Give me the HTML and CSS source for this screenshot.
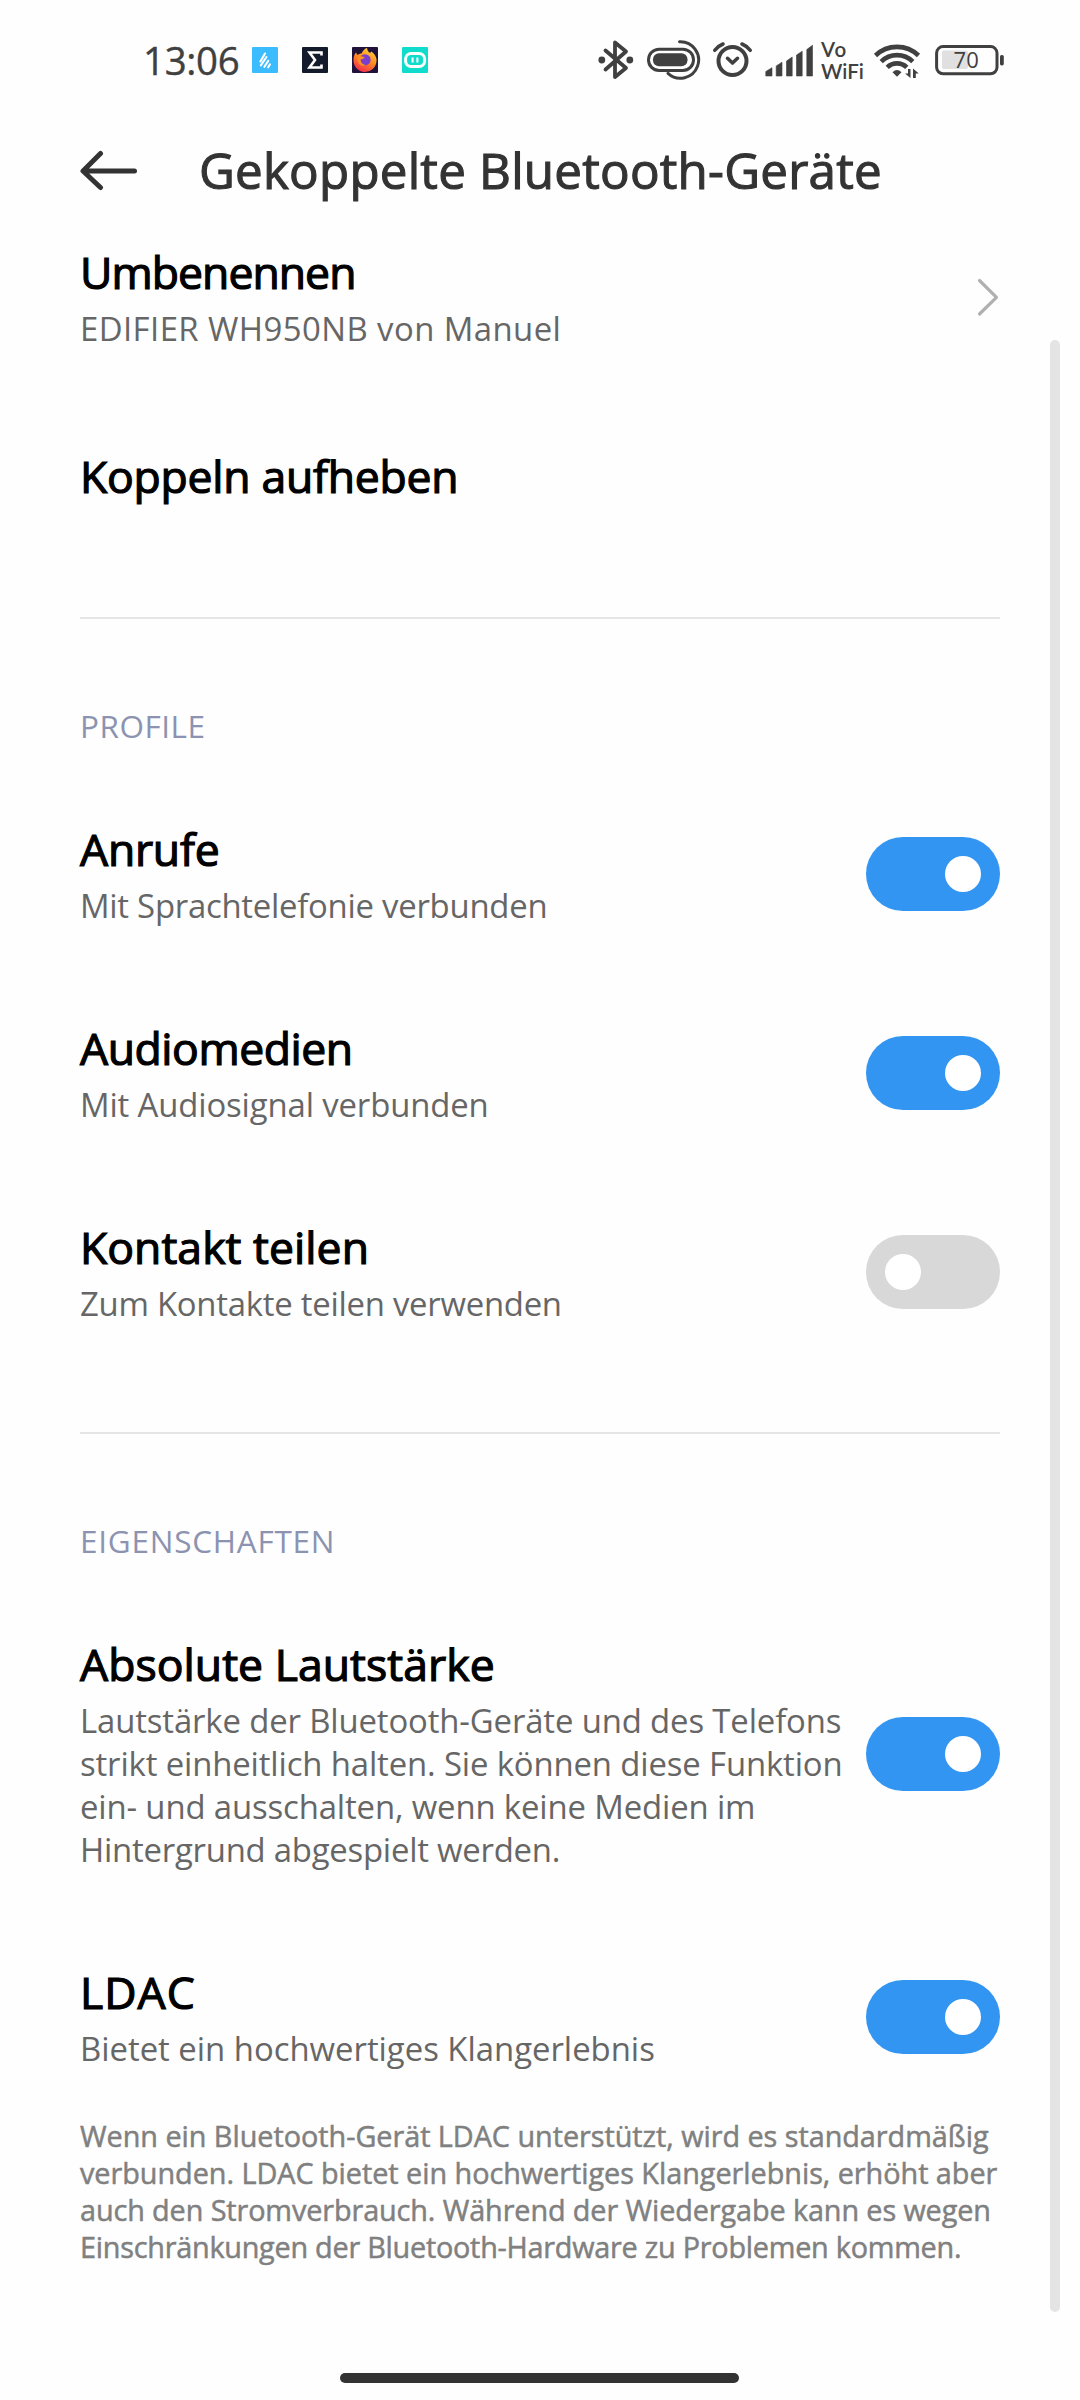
FILE: index.html
```html
<!DOCTYPE html>
<html lang="de">
<head>
    <meta charset="UTF-8">
    <meta name="viewport" content="width=device-width, initial-scale=1.0" />
    <title>Gekoppelte Bluetooth-Geräte</title>

    <link rel="stylesheet" href="styles.css">
</head>
<body>
  <div class="statusbar">
    <span class="time">13:06</span>
    <div class="apps">
      <svg width="26" height="26" viewBox="0 0 26 26">
        <rect width="26" height="26" rx="1" fill="#3bbcff"/>
        <path d="M8.4 14.5 L13 6.5 M8.8 18.3 L14.5 10 M12.4 19.8 L16.3 13.8 M16.2 20.3 L18 17.3" stroke="#fff" stroke-width="2.1" stroke-linecap="round"/>
      </svg>
      <svg width="26" height="26" viewBox="0 0 26 26">
        <rect width="26" height="26" rx="1" fill="#131a2b"/>
        <path d="M19.5 8.5 V5.5 H7.5 L13 13 L7.5 20.5 H19.5 V17.5" fill="none" stroke="#fff" stroke-width="2.6"/>
      </svg>
      <svg width="26" height="26" viewBox="0 0 26 26">
        <defs>
          <linearGradient id="fire" x1="0.8" y1="0" x2="0.3" y2="1">
            <stop offset="0" stop-color="#ffd83a"/>
            <stop offset="0.5" stop-color="#ff8a1f"/>
            <stop offset="1" stop-color="#f5294f"/>
          </linearGradient>
        </defs>
        <rect width="26" height="26" rx="1" fill="#20123a"/>
        <path d="M1.5 13 Q1.5 8 4 5.5 L5.5 8 Q8 6 9.5 6.5 Q12 1.5 15 1 Q15 4 18 6 L19.5 4.5 Q25 9 24.5 14 A11.5 11.5 0 0 1 1.5 13z" fill="url(#fire)"/>
        <circle cx="13" cy="12.8" r="5.6" fill="#7a3fd0"/>
        <path d="M4.5 9.5 Q9 8 13 10.5 Q10.5 12.5 8.5 12.5 Q9 17 13.5 18 Q10 20 7 17z" fill="#ff8f24"/>
      </svg>
      <svg width="26" height="26" viewBox="0 0 26 26">
        <rect width="26" height="26" rx="1" fill="#0fdccb"/>
        <rect x="3.6" y="6.4" width="19" height="13.2" rx="5.6" fill="none" stroke="#fff" stroke-width="3"/>
        <path d="M10.6 10.5v5M15.4 10.5v5" stroke="#fff" stroke-width="2"/>
      </svg>
    </div>

    <div class="system">
      <!-- bluetooth -->
      <svg class="bt" width="36" height="50" viewBox="0 0 36 50">
        <path class="line" d="M7.5 15.5 L28 33 L17 42 V7.5 L28 16.5 L7.5 34.5" stroke-width="3.8"/>
        <circle cx="3.8" cy="25" r="3.4"/><circle cx="31.8" cy="25" r="3.4"/>
      </svg>
      <!-- dynamic pill -->
      <svg class="pill" width="55" height="50" viewBox="0 0 55 50">
        <rect class="line" x="2.5" y="14.2" width="45" height="21.3" rx="10.6" stroke-width="3"/>
        <rect x="7" y="18.3" width="34.5" height="13" rx="6"/>
        <path class="line" d="M33.5 6.8 A18.2 18.2 0 1 1 22 38.3" stroke-width="3"/>
      </svg>
      <!-- alarm -->
      <svg class="alarm" width="41" height="50" viewBox="0 0 41 50">
        <circle class="line" cx="20.5" cy="26" r="14" stroke-width="4"/>
        <path class="line" d="M15.5 23.3 L20.5 28 L25.5 23.3 M2.8 15.3 Q6 11 11 9 M38.2 15.3 Q35 11 30 9" stroke-width="3.6"/>
      </svg>
      <!-- signal -->
      <svg class="signal" width="49" height="50" viewBox="0 0 49 50">
        <path d="M0.8 41V36.5L7 32.7V41z M11.2 41V31L17 27.2V41z M21.5 41V26L27.2 22V41z M31.5 41V20L37.2 16.2V41z M41.8 41V14.5L47.5 10.2V41z" stroke="#404040" stroke-width="0.6" stroke-linejoin="round"/>
      </svg>
      <div class="vowifi"><span class="vo">Vo</span><span>WiFi</span></div>
      <!-- wifi -->
      <svg class="wifi" width="48" height="50" viewBox="0 0 48 50">
        <path class="ring" d="M2.5 20.5 A31 31 0 0 1 45.5 20.5 M8.2 26.6 A22.5 22.5 0 0 1 39.8 26.6 M14.2 32.4 A14 14 0 0 1 33.8 32.4"/>
        <path d="M19.5 37.2 Q24 32.6 28.5 37.2 L24 41.8z"/>
        <path d="M37.5 34V43L32 38.5H35V34z M40 43V33.5L45.8 38.5H42.8V43z"/>
      </svg>
      <!-- battery -->
      <svg class="battery" width="70" height="50" viewBox="0 0 70 50">
        <rect x="7" y="15.4" width="26" height="18.6" rx="2" fill="#e0e0e0"/>
        <rect class="line" x="1.6" y="11.6" width="60.4" height="27.2" rx="6.5" stroke-width="3"/>
        <rect x="65" y="20" width="3.8" height="10.4" rx="1.6"/>
        <text x="31.2" y="33.3" text-anchor="middle">70</text>
      </svg>
    </div>
  </div>

  <div class="header">
    <svg class="back" width="60" height="44" viewBox="0 0 60 44">
      <path d="M20.5 4.5 L3 22 L20.5 38.5 M4 22 H54.5" fill="none" stroke="#333" stroke-width="5" stroke-linecap="round" stroke-linejoin="round"/>
    </svg>
    <h1>Gekoppelte Bluetooth-Geräte</h1>
  </div>

  <div class="content">
    <div class="row first">
      <div class="text">
        <h2 class="tight">Umbenennen</h2>
        <p class="loose">EDIFIER WH950NB von Manuel</p>
      </div>
      <svg class="chevron" width="24" height="40" viewBox="0 0 24 40">
        <path d="M3.5 3.5 L20.5 20.3 L3.5 37" fill="none" stroke="#b0b0b0" stroke-width="3.2" stroke-linecap="round" stroke-linejoin="round"/>
      </svg>
    </div>
    <div class="row single">
      <div class="text">
        <h2>Koppeln aufheben</h2>
      </div>
    </div>

    <div class="divider"></div>
    <div class="label short">PROFILE</div>

    <div class="row">
      <div class="text">
        <h2>Anrufe</h2>
        <p class="tight">Mit Sprachtelefonie verbunden</p>
      </div>
      <div class="switch on"></div>
    </div>
    <div class="row">
      <div class="text">
        <h2 class="snug">Audiomedien</h2>
        <p>Mit Audiosignal verbunden</p>
      </div>
      <div class="switch on"></div>
    </div>
    <div class="row">
      <div class="text">
        <h2 class="wide">Kontakt teilen</h2>
        <p class="tight">Zum Kontakte teilen verwenden</p>
      </div>
      <div class="switch"></div>
    </div>

    <div class="divider"></div>
    <div class="label">EIGENSCHAFTEN</div>

    <div class="row">
      <div class="text">
        <h2 class="wide">Absolute Lautstärke</h2>
        <p>Lautstärke der Bluetooth-Geräte und des Telefons<br>
        strikt einheitlich halten. Sie können diese Funktion<br>
        ein- und ausschalten, wenn keine Medien im<br>
        <span class="last">Hintergrund abgespielt werden.</span></p>
      </div>
      <div class="switch on"></div>
    </div>
    <div class="row">
      <div class="text">
        <h2 class="caps">LDAC</h2>
        <p class="even">Bietet ein hochwertiges Klangerlebnis</p>
      </div>
      <div class="switch on"></div>
    </div>

    <div class="note">Wenn ein Bluetooth-Gerät LDAC unterstützt, wird es standardmäßig<br>
    verbunden. LDAC bietet ein hochwertiges Klangerlebnis, erhöht aber<br>
    <span class="third">auch den Stromverbrauch. Während der Wiedergabe kann es wegen</span><br>
    <span class="last">Einschränkungen der Bluetooth-Hardware zu Problemen kommen.</span></div>
  </div>

  <div class="scrollbar"></div>
  <div class="homebar"></div>
</body>
</html>
```
FILE: styles.css
```css
* {
  box-sizing: border-box;
}
body {
  position: relative;
  font-family: "Open Sans", "Noto Sans", sans-serif;
  background-color: #fefefe;
  margin: 0;
  padding: 0;
  width: 1080px;
  height: 2400px;
  overflow: hidden;
}
h1, h2, p {
  margin: 0;
  font-weight: 400;
}

/* status bar */
.statusbar {
  display: flex;
  align-items: center;
  height: 120px;
  padding-left: 143px;
}
.time {
  width: 109px;
  font-size: 38.4px;
  line-height: 50px;
  letter-spacing: -0.3px;
  color: #404040;
  -webkit-text-stroke: 0.4px #404040;
}
.apps {
  display: flex;
  gap: 24px;
}
.system {
  display: flex;
  margin-left: 170px;
  fill: #404040;
}
.system .line {
  fill: none;
  stroke: #404040;
  stroke-linecap: round;
  stroke-linejoin: round;
}
.system .ring {
  fill: none;
  stroke: #404040;
  stroke-width: 4.6;
}
.pill {
  margin-left: 12px;
}
.alarm {
  margin-left: 11px;
}
.signal {
  margin-left: 12px;
}
.vowifi {
  display: flex;
  flex-direction: column;
  width: 51px;
  padding: 4px 0 0 7px;
  font-family: Lato, sans-serif;
  font-size: 20.5px;
  font-weight: 600;
  line-height: 21.5px;
  color: #404040;
}
.vowifi .vo {
  letter-spacing: 1px;
}
.wifi {
  margin-left: 8px;
}
.battery {
  margin-left: 14px;
}
.battery text {
  font-size: 22px;
}
.statusbar svg {
  display: block;
}

/* title */
.header {
  display: flex;
  align-items: center;
  height: 100px;
  padding-left: 80px;
}
.back {
  margin-top: 1px;
}
.header h1 {
  margin-left: 59px;
  font-size: 49.3px;
  line-height: 68px;
  letter-spacing: 0.23px;
  white-space: nowrap;
  color: #333;
  -webkit-text-stroke: 1.1px #333;
}

/* list */
.content {
  padding: 0 80px;
}
.row {
  display: flex;
  justify-content: space-between;
  align-items: center;
  padding: 45px 0 46px;
}
.row.first {
  padding-top: 22px;
}
.row.single {
  height: 160px;
  padding: 0;
}
.text {
  white-space: nowrap;
}
.text h2 {
  font-size: 44.5px;
  line-height: 60px;
  letter-spacing: -0.25px;
  color: #000;
  -webkit-text-stroke: 1.2px #000;
}
.text h2.tight {
  letter-spacing: -0.95px;
}
.text h2.snug {
  letter-spacing: -0.45px;
}
.text h2.wide {
  letter-spacing: 0.05px;
}
.text h2.caps {
  letter-spacing: 1px;
}
.text p {
  margin-top: 5px;
  font-size: 32.9px;
  line-height: 43px;
  letter-spacing: -0.14px;
  color: #666;
}
.text p.loose {
  letter-spacing: 0.43px;
}
.text p.tight {
  letter-spacing: -0.26px;
}
.text p.even {
  letter-spacing: -0.02px;
}
.text .last {
  letter-spacing: -0.24px;
}
.divider {
  height: 2px;
  margin: 61px 0 86px;
  background-color: #e5e5e5;
}
.label {
  margin-bottom: 27px;
  font-size: 31.5px;
  line-height: 42px;
  letter-spacing: 0.75px;
  color: #8c93b0;
}
.label.short {
  letter-spacing: 0.5px;
}
.note {
  margin-top: 1px;
  font-size: 28.8px;
  line-height: 37px;
  letter-spacing: -0.03px;
  white-space: nowrap;
  color: #808080;
  -webkit-text-stroke: 0.5px #808080;
}
.note .third {
  letter-spacing: -0.1px;
}
.note .last {
  letter-spacing: -0.24px;
}

.chevron {
  margin: 2px 0 0;
}
.switch {
  display: flex;
  align-items: center;
  width: 134px;
  height: 74px;
  margin-top: 2px;
  padding: 0 19px;
  border-radius: 37px;
  background-color: #d8d8d8;
}
.switch::before {
  content: "";
  width: 36px;
  height: 36px;
  border-radius: 50%;
  background-color: #fff;
}
.switch.on {
  justify-content: flex-end;
  background-color: #3395f2;
}

.scrollbar {
  position: absolute;
  top: 340px;
  right: 20px;
  width: 10px;
  height: 1972px;
  border-radius: 5px;
  background-color: #e4e4e4;
}
.homebar {
  position: absolute;
  bottom: 17px;
  left: 340px;
  width: 399px;
  height: 10px;
  border-radius: 5px;
  background-color: #333;
}
```
